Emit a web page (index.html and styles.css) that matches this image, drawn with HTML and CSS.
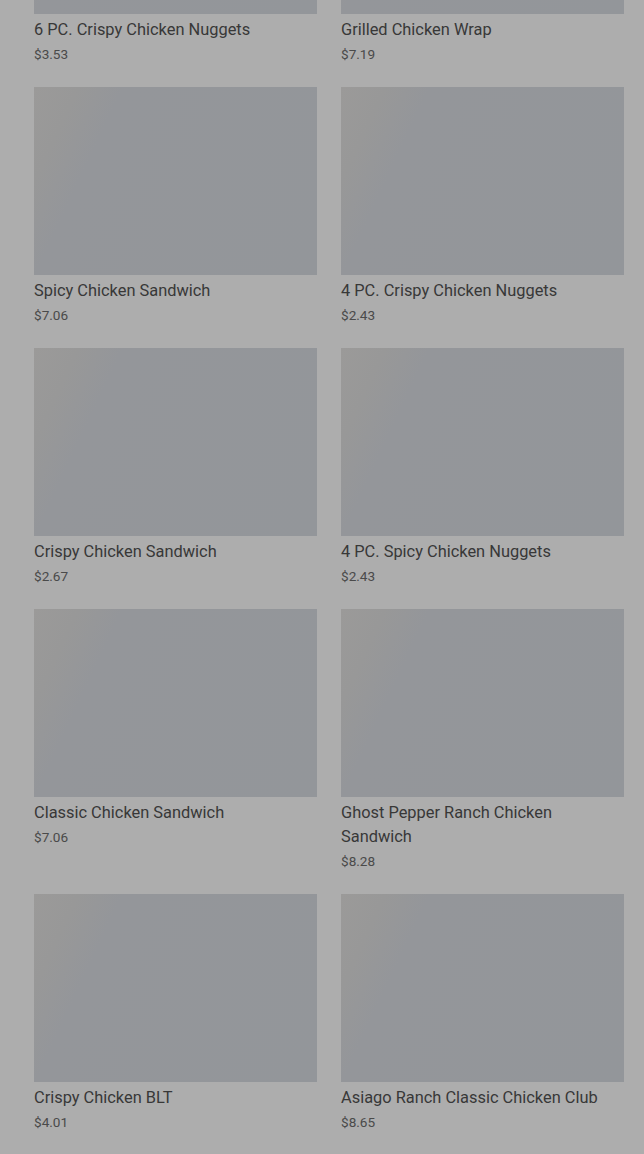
FILE: index.html
```html
<!DOCTYPE html>
<html>
<head>
<meta charset="utf-8">
<link rel="stylesheet" href="styles.css">
</head>
<body>
<main class="grid">
  <div class="card"><div class="thumb"></div><div class="name">6 PC. Crispy Chicken Nuggets</div><div class="price">$3.53</div></div>
  <div class="card"><div class="thumb"></div><div class="name">Grilled Chicken Wrap</div><div class="price">$7.19</div></div>
  <div class="card"><div class="thumb"></div><div class="name">Spicy Chicken Sandwich</div><div class="price">$7.06</div></div>
  <div class="card"><div class="thumb"></div><div class="name">4 PC. Crispy Chicken Nuggets</div><div class="price">$2.43</div></div>
  <div class="card"><div class="thumb"></div><div class="name">Crispy Chicken Sandwich</div><div class="price">$2.67</div></div>
  <div class="card"><div class="thumb"></div><div class="name">4 PC. Spicy Chicken Nuggets</div><div class="price">$2.43</div></div>
  <div class="card"><div class="thumb"></div><div class="name">Classic Chicken Sandwich</div><div class="price">$7.06</div></div>
  <div class="card"><div class="thumb"></div><div class="name">Ghost Pepper Ranch Chicken Sandwich</div><div class="price">$8.28</div></div>
  <div class="card"><div class="thumb"></div><div class="name">Crispy Chicken BLT</div><div class="price">$4.01</div></div>
  <div class="card"><div class="thumb"></div><div class="name">Asiago Ranch Classic Chicken Club</div><div class="price">$8.65</div></div>
</main>
</body>
</html>
```
FILE: styles.css
```css
html, body {
  margin: 0;
  padding: 0;
  background: #adadad;
  overflow: hidden;
}
body {
  font-family: Roboto, "Liberation Sans", sans-serif;
  height: 1154px;
}
.grid {
  display: grid;
  grid-template-columns: 283px 283px;
  column-gap: 24px;
  row-gap: 21px;
  padding: 0 20px 0 34px;
  margin-top: -174px;
}
.card {
  display: flex;
  flex-direction: column;
}
.thumb {
  height: 188px;
  background: linear-gradient(115deg, #9b9a99 0%, #989898 12%, #94969a 24%, #93969a 100%);
}
.name {
  margin-top: 4px;
  padding-right: 20px;
  font-size: 16.4px;
  line-height: 24px;
  color: #383838;
}
.price {
  font-size: 13.6px;
  line-height: 24px;
  color: #4a4a4a;
}
```
